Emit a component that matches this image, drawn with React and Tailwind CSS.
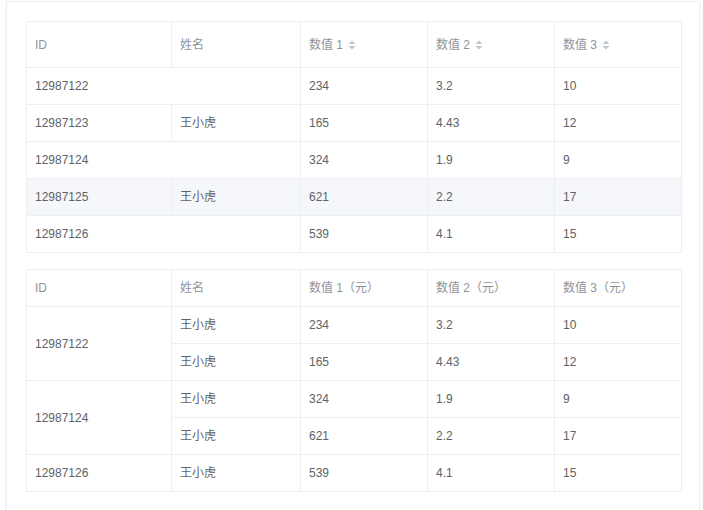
import React from "react";

const font = { fontFamily: '"Liberation Sans", Arial, "Noto Sans CJK SC", sans-serif' };

function SortIcon() {
  return (
    <svg width="8" height="10" viewBox="0 0 8 10" className="inline-block ml-[5px] align-[-1px]">
      <path d="M4 0.5 L7.5 4 L0.5 4 Z" fill="#c0c4cc" />
      <path d="M4 9.5 L7.5 6 L0.5 6 Z" fill="#c0c4cc" />
    </svg>
  );
}

const th = "border-r border-b border-[#ebeef5] text-left font-normal text-[#909399] pl-[8px] align-middle";
const td = "border-r border-b border-[#ebeef5] text-left text-[#606266] pl-[8px] align-middle";

function Cols() {
  return (
    <colgroup>
      <col style={{ width: 145 }} />
      <col style={{ width: 129 }} />
      <col style={{ width: 127 }} />
      <col style={{ width: 127 }} />
      <col style={{ width: 127 }} />
    </colgroup>
  );
}

export default function App() {
  const t1 = [
    { id: "12987122", name: null, a: "234", b: "3.2", c: "10" },
    { id: "12987123", name: "王小虎", a: "165", b: "4.43", c: "12" },
    { id: "12987124", name: null, a: "324", b: "1.9", c: "9" },
    { id: "12987125", name: "王小虎", a: "621", b: "2.2", c: "17", hl: true },
    { id: "12987126", name: null, a: "539", b: "4.1", c: "15" },
  ];
  const t2 = [
    { id: "12987122", span: 2, a: "234", b: "3.2", c: "10" },
    { id: null, a: "165", b: "4.43", c: "12" },
    { id: "12987124", span: 2, a: "324", b: "1.9", c: "9" },
    { id: null, a: "621", b: "2.2", c: "17" },
    { id: "12987126", span: 1, a: "539", b: "4.1", c: "15" },
  ];
  return (
    <div className="bg-white w-[703px] h-[510px] overflow-hidden text-[12px]" style={font}>
      <div className="ml-[6px] mt-px w-[694px] h-[530px] border border-[#ebeef5] bg-white shadow-[0_1px_4px_rgba(0,0,0,0.06)] pt-[19px] pl-[19px]">
        <table className="border-collapse table-fixed w-[655px] border-t border-l border-[#ebeef5]">
          <Cols />
          <thead>
            <tr className="h-[46px]">
              <th className={th}>ID</th>
              <th className={th}>姓名</th>
              <th className={th}>数值 1<SortIcon /></th>
              <th className={th}>数值 2<SortIcon /></th>
              <th className={th}>数值 3<SortIcon /></th>
            </tr>
          </thead>
          <tbody>
            {t1.map((r) => (
              <tr key={r.id} className={"h-[37px] " + (r.hl ? "bg-[#f5f7fa]" : "")}>
                {r.name ? (
                  <>
                    <td className={td}>{r.id}</td>
                    <td className={td}>{r.name}</td>
                  </>
                ) : (
                  <td className={td} colSpan={2}>{r.id}</td>
                )}
                <td className={td}>{r.a}</td>
                <td className={td}>{r.b}</td>
                <td className={td}>{r.c}</td>
              </tr>
            ))}
          </tbody>
        </table>

        <table className="mt-[16px] border-collapse table-fixed w-[655px] border-t border-l border-[#ebeef5]">
          <Cols />
          <thead>
            <tr className="h-[37px]">
              <th className={th}>ID</th>
              <th className={th}>姓名</th>
              <th className={th}>数值 1（元）</th>
              <th className={th}>数值 2（元）</th>
              <th className={th}>数值 3（元）</th>
            </tr>
          </thead>
          <tbody>
            {t2.map((r, i) => (
              <tr key={i} className="h-[37px]">
                {r.id && (
                  <td className={td} rowSpan={r.span}>{r.id}</td>
                )}
                <td className={td}>王小虎</td>
                <td className={td}>{r.a}</td>
                <td className={td}>{r.b}</td>
                <td className={td}>{r.c}</td>
              </tr>
            ))}
          </tbody>
        </table>
      </div>
    </div>
  );
}
